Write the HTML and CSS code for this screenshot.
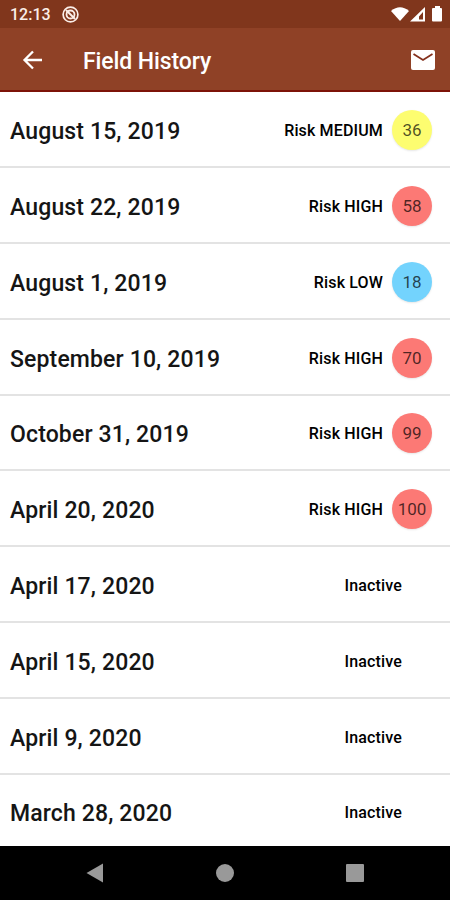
FILE: index.html
```html
<!DOCTYPE html>
<html lang="en">
<head>
    <meta charset="UTF-8" />
    <meta name="viewport" content="width=device-width, initial-scale=1.0"/>
    <title>Field History</title>
    <link rel="stylesheet" href="styles.css">
</head>
<body>
    <div class="status-bar">
        <span class="clock">12:13</span>
        <svg class="app-icon" width="18" height="18" viewBox="0 0 18 18">
            <circle cx="8.500" cy="8.500" r="7.4" fill="none" stroke="#fbeee8" stroke-width="1.7"/>
            <circle cx="8.500" cy="8.500" r="4" fill="none" stroke="#fbeee8" stroke-width="1.8"/>
            <path d="M4 4l9 9" stroke="#fbeee8" stroke-width="2"/>
        </svg>
        <svg class="signals" width="54" height="18" viewBox="0 0 54 18">
            <path d="M0 5Q9 -2.500 18 5L9 15z" fill="#fff"/>
            <path fill-rule="evenodd" d="M34 1V15.500H19zM32 6l-4 4.500V13.500h4z" fill="#fff"/>
            <path d="M42 2h2V0h5v2h1q1 0 1 1v11.500q0 1-1 1h-8q-1 0-1-1V3q0-1 1-1z" fill="#fff"/>
        </svg>
    </div>

    <header class="toolbar">
        <svg width="24" height="24" viewBox="0 0 24 24">
            <path d="M21 12H4M12 3.500L3.500 12l8.500 8.500" fill="none" stroke="#fff" stroke-width="2.300"/>
        </svg>
        <h1>Field History</h1>
        <svg class="mail" width="24" height="20" viewBox="0 0 24 20">
            <rect width="24" height="20" rx="2" fill="#fff"/>
            <path d="M2.500 4l9.500 6 9.500-6" fill="none" stroke="#84301c" stroke-width="1.800"/>
        </svg>
    </header>

    <ul class="history">
        <li><span class="date">August 15, 2019</span><span class="risk">Risk MEDIUM</span><span class="score medium">36</span></li>
        <li><span class="date">August 22, 2019</span><span class="risk">Risk HIGH</span><span class="score high">58</span></li>
        <li><span class="date">August 1, 2019</span><span class="risk">Risk LOW</span><span class="score low">18</span></li>
        <li><span class="date">September 10, 2019</span><span class="risk">Risk HIGH</span><span class="score high">70</span></li>
        <li><span class="date">October 31, 2019</span><span class="risk">Risk HIGH</span><span class="score high">99</span></li>
        <li><span class="date">April 20, 2020</span><span class="risk">Risk HIGH</span><span class="score high">100</span></li>
        <li><span class="date">April 17, 2020</span><span class="inactive">Inactive</span></li>
        <li><span class="date">April 15, 2020</span><span class="inactive">Inactive</span></li>
        <li><span class="date">April 9, 2020</span><span class="inactive">Inactive</span></li>
        <li><span class="date">March 28, 2020</span><span class="inactive">Inactive</span></li>
    </ul>

    <nav class="nav-bar">
        <svg width="20" height="22" viewBox="0 0 20 22"><path d="M18 1.500v19L1.500 11z" fill="#999"/></svg>
        <svg width="20" height="20" viewBox="0 0 20 20"><circle cx="10" cy="10" r="9" fill="#999"/></svg>
        <svg width="20" height="20" viewBox="0 0 20 20"><rect x="1" y="1" width="18" height="18" rx="1" fill="#999"/></svg>
    </nav>
</body>
</html>
```

FILE: styles.css
```css
* {
    box-sizing: border-box;
}
body {
    margin: 0;
    height: 900px;
    display: flex;
    flex-direction: column;
    overflow: hidden;
    background-color: white;
    color: #151515;
    font-family: Roboto, sans-serif;
}
.status-bar {
    height: 28px;
    flex: none;
    display: flex;
    align-items: center;
    padding: 1px 5px 0 10px;
    background-color: #80361c;
    color: #fbeee8;
}
.clock {
    width: 52px;
    font-size: 16px;
    font-weight: 500;
}
.signals {
    margin-left: auto;
}
.toolbar {
    height: 64px;
    flex: none;
    display: flex;
    align-items: center;
    padding: 2px 15px 0 21px;
    background-color: #8f4126;
    border-bottom: 2px solid #7d1308;
    color: white;
}
.toolbar h1 {
    margin: 2px 0 0 38px;
    font-size: 23px;
    font-weight: 500;
    letter-spacing: -0.1px;
}
.mail {
    margin-left: auto;
}
.history {
    flex: 1;
    min-height: 0;
    margin: 0;
    padding: 0;
    list-style: none;
    overflow: hidden;
}
.history li {
    height: 75.8px;
    display: flex;
    align-items: center;
    padding: 2px 18px 0 10px;
    border-bottom: 2px solid #e3e3e3;
}
.history li:first-child {
    height: 76.2px;
}
.date {
    flex: 1;
    padding-top: 3px;
    font-size: 23px;
    font-weight: 500;
    letter-spacing: 0.14px;
}
.risk,
.inactive {
    padding-top: 1px;
    color: black;
    font-size: 16px;
    font-weight: 500;
    letter-spacing: 0.15px;
}
.inactive {
    margin-right: 30px;
}
.score {
    width: 40px;
    height: 40px;
    margin-left: 9px;
    border-radius: 50%;
    color: rgba(0, 0, 0, 0.7);
    font-size: 17px;
    line-height: 40px;
    text-align: center;
    box-shadow: 0 1px 2px rgba(0, 0, 0, 0.1);
}
.medium {
    background-color: #fdfd70;
}
.high {
    background-color: #fc7975;
}
.low {
    background-color: #73d3fd;
}
.nav-bar {
    height: 54px;
    flex: none;
    display: flex;
    align-items: center;
    justify-content: space-between;
    padding: 0 85px;
    background-color: black;
}
```
